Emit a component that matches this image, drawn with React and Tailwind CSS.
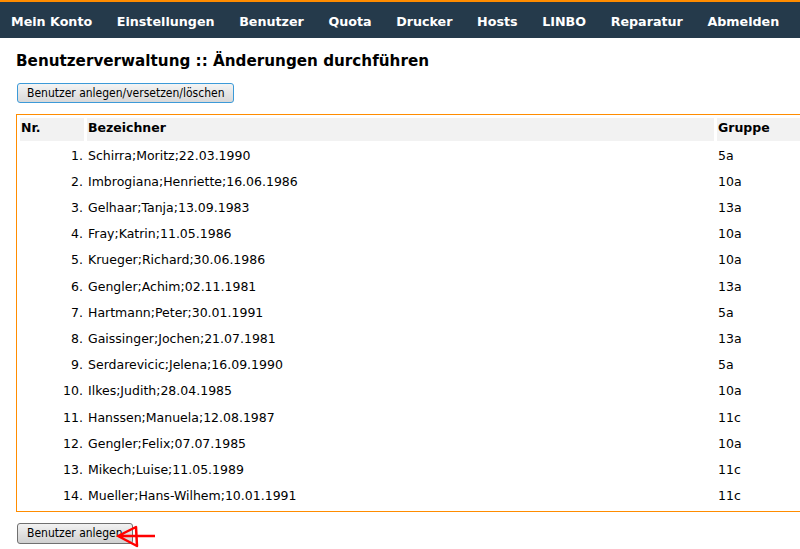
import { useState } from "react"

const NAV = ["Mein Konto", "Einstellungen", "Benutzer", "Quota", "Drucker", "Hosts", "LINBO", "Reparatur", "Abmelden"]

const ROWS = [
  ["Schirra;Moritz;22.03.1990", "5a"],
  ["Imbrogiana;Henriette;16.06.1986", "10a"],
  ["Gelhaar;Tanja;13.09.1983", "13a"],
  ["Fray;Katrin;11.05.1986", "10a"],
  ["Krueger;Richard;30.06.1986", "10a"],
  ["Gengler;Achim;02.11.1981", "13a"],
  ["Hartmann;Peter;30.01.1991", "5a"],
  ["Gaissinger;Jochen;21.07.1981", "13a"],
  ["Serdarevicic;Jelena;16.09.1990", "5a"],
  ["Ilkes;Judith;28.04.1985", "10a"],
  ["Hanssen;Manuela;12.08.1987", "11c"],
  ["Gengler;Felix;07.07.1985", "10a"],
  ["Mikech;Luise;11.05.1989", "11c"],
  ["Mueller;Hans-Wilhem;10.01.1991", "11c"],
]

export default function App() {
  const [rows] = useState(ROWS)

  return (
    <div className="w-[800px] h-[549px] overflow-hidden bg-white text-black font-['DejaVu_Sans',sans-serif] text-[12.5px]">
      {/* Navigation */}
      <div className="border-t-2 border-[#ff8c00] bg-[#253a4b] h-[38px] flex items-center pt-[4px] pl-[11px] pr-3 gap-[24.6px]">
        {NAV.map((n) => (
          <span key={n} className="text-white font-bold text-[12.7px]">{n}</span>
        ))}
      </div>

      <div className="px-4">
        <h1 className="font-bold text-[15.2px] mt-[13px] leading-5">Benutzerverwaltung :: Änderungen durchführen</h1>

        <button className="mt-[12px] ml-px h-5 px-[9px] rounded-[3px] border border-[#3c9ad8] bg-gradient-to-b from-[#f4f4f4] to-[#d8d8d8] font-['DejaVu_Sans_Condensed','DejaVu_Sans',sans-serif] text-[12px] leading-none">
          Benutzer anlegen/versetzen/löschen
        </button>

        <table className="mt-[11px] w-[800px] border border-[#ff8c00] border-separate border-spacing-[3px]">
          <thead>
            <tr className="h-[23px]">
              <th className="w-[64px] bg-[#f2f2f2] text-left align-top font-bold pl-px pt-[2px] leading-4">Nr.</th>
              <th className="w-[627px] bg-[#f2f2f2] text-left align-top font-bold pl-px pt-[2px] leading-4">Bezeichner</th>
              <th className="bg-[#f2f2f2] text-left align-top font-bold pl-px pt-[2px] leading-4">Gruppe</th>
            </tr>
          </thead>
          <tbody>
            {rows.map(([name, grp], i) => (
              <tr key={i} className="h-[23.2px]">
                <td className="text-right pr-px pt-px">{i + 1}.</td>
                <td className="pl-px pt-px">{name}</td>
                <td className="pl-px pt-px">{grp}</td>
              </tr>
            ))}
          </tbody>
        </table>

        <div className="relative mt-[11px] ml-px">
          <button className="h-[21px] px-[9px] rounded-[3px] border border-[#707070] bg-gradient-to-b from-[#f2f2f2] to-[#d0d0d0] font-['DejaVu_Sans_Condensed','DejaVu_Sans',sans-serif] text-[12px] leading-none">
            Benutzer anlegen
          </button>
          <svg className="absolute left-[82px] top-0" width="60" height="26" viewBox="0 0 60 26">
            <path d="M19 13 L37 4 L38 23 Z M19 13 L56 13" fill="none" stroke="#ff0000" strokeWidth="2.5" strokeLinejoin="round" />
          </svg>
        </div>
      </div>
    </div>
  )
}
